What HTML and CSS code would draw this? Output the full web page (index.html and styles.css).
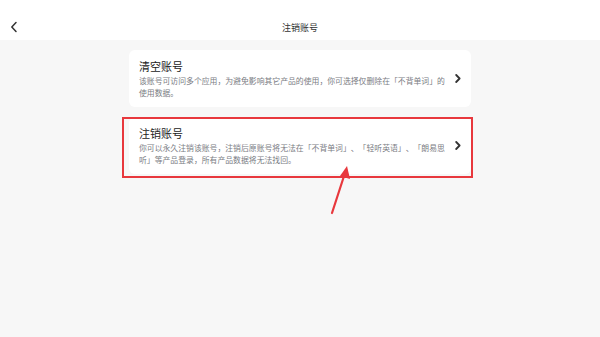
FILE: index.html
```html
<!DOCTYPE html>
<html lang="zh-CN">
<head>
    <meta charset="UTF-8">
    <meta name="viewport" content="width=device-width, initial-scale=1.0">
    <title>注销账号</title>
    <link rel="stylesheet" href="styles.css">
</head>
<body>
    <div class="header">
        <div class="back">
            <svg width="8" height="12" viewBox="0 0 8 12"><path d="M6 1.5 L1.8 6 L6 10.5" fill="none" stroke="#333" stroke-width="1.5" stroke-linecap="round" stroke-linejoin="round"/></svg>
        </div>
        <div class="header-title">注销账号</div>
        <div class="back"></div>
    </div>

    <div class="list">
        <div class="card">
            <div class="card-text">
                <div class="card-title">清空账号</div>
                <div class="card-desc">该账号可访问多个应用，为避免影响其它产品的使用，你可选择仅删除在「不背单词」的<br>使用数据。</div>
            </div>
            <svg class="arrow-right" width="6" height="9" viewBox="0 0 6 9"><path d="M1.2 1 L4.6 4.5 L1.2 8" fill="none" stroke="#333" stroke-width="1.8" stroke-linecap="round" stroke-linejoin="round"/></svg>
        </div>

        <!-- 红框标注 -->
        <div class="card-wrap">
            <div class="card">
                <div class="card-text">
                    <div class="card-title">注销账号</div>
                    <div class="card-desc">你可以永久注销该账号，注销后原账号将无法在「不背单词」、「轻听英语」、「朗易思<br>听」等产品登录，所有产品数据将无法找回。</div>
                </div>
                <svg class="arrow-right" width="6" height="9" viewBox="0 0 6 9"><path d="M1.2 1 L4.6 4.5 L1.2 8" fill="none" stroke="#333" stroke-width="1.8" stroke-linecap="round" stroke-linejoin="round"/></svg>
            </div>
            <div class="mark"></div>
        </div>
    </div>

    <svg class="pointer" width="30" height="60" viewBox="0 0 30 60">
        <line x1="6" y1="54" x2="19" y2="14" stroke="#e8383d" stroke-width="2.2" stroke-linecap="round"/>
        <polygon points="21,7 24,20 14,17" fill="#e8383d"/>
    </svg>
</body>
</html>
```
FILE: styles.css
```css
body {
    margin: 0;
    background: #f7f7f7;
    font-family: "Noto Sans CJK SC", "Noto Sans", sans-serif;
    color: #222;
    position: relative;
    height: 337px;
    overflow: hidden;
}
.header {
    height: 40px;
    background: #fff;
    display: flex;
    align-items: center;
    padding-top: 14px;
    box-sizing: border-box;
}
.back {
    width: 40px;
    padding-left: 10px;
    box-sizing: border-box;
    display: flex;
    align-items: center;
}
.header-title {
    flex: 1;
    text-align: center;
    font-size: 9px;
    color: #333;
}
.list {
    width: 342px;
    margin: 10px auto 0;
    display: flex;
    flex-direction: column;
    gap: 10px;
}
.card {
    background: #fff;
    border-radius: 6px;
    padding: 9px 10px 9px 10px;
    display: flex;
    align-items: center;
    justify-content: space-between;
}
.card-title {
    font-size: 11px;
    line-height: 14px;
    font-weight: 400;
    color: #222;
}
.card-desc {
    margin-top: 2px;
    font-size: 7.85px;
    line-height: 11.5px;
    color: #7a7c83;
    white-space: nowrap;
    text-spacing-trim: space-all;
}
.arrow-right {
    flex: none;
}
.card-wrap {
    position: relative;
}
.mark {
    position: absolute;
    left: -7px;
    right: -2px;
    top: 0;
    bottom: -4px;
    border: 2.5px solid #e8383d;
}
.pointer {
    position: absolute;
    left: 326px;
    top: 159px;
}
```
